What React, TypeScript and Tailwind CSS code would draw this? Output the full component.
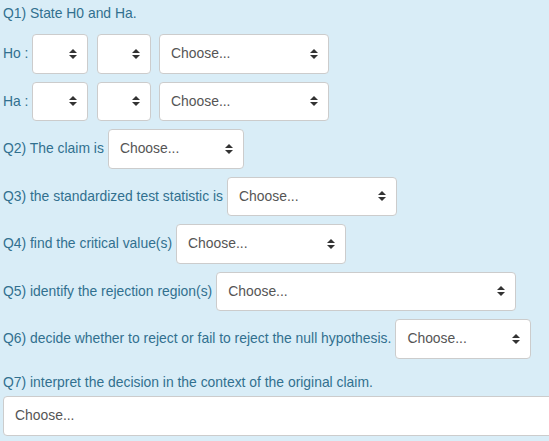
import React from 'react';

function Caret() {
  return (
    <svg width="8" height="10" viewBox="0 0 8 10" className="shrink-0">
      <path d="M0 4 L4 0 L8 4 Z" fill="#333" />
      <path d="M0 6 L4 10 L8 6 Z" fill="#333" />
    </svg>
  );
}

function FakeSelect({ width, text = 'Choose...' }: { width: string; text?: string }) {
  return (
    <div
      className={`${width} h-[39.5px] shrink-0 flex items-center justify-between pl-[11px] pr-[10px] bg-white border border-[#ccc] rounded-[4px] text-[#555]`}
    >
      <span>{text}</span>
      <Caret />
    </div>
  );
}

function Row({ label, children, className = '' }: { label: string; children: React.ReactNode; className?: string }) {
  return (
    <div className={`flex items-center gap-[4px] ${className}`}>
      <span className="whitespace-nowrap">{label}</span>
      {children}
    </div>
  );
}

export default function App() {
  return (
    <div
      className="w-[549px] h-[441px] overflow-hidden bg-[#d9edf7] text-[#31708f] text-[13.9px] pl-[3px] pt-[4px]"
      style={{ fontFamily: '"Liberation Sans", Arial, sans-serif' }}
    >
      <div className="h-[18px] leading-[18px]">Q1) State H0 and Ha.</div>

      <div className="flex flex-col gap-[8px] mt-[12px]">
        <div className="flex items-center">
          <span className="w-[29px] shrink-0 whitespace-nowrap">Ho :</span>
          <FakeSelect width="w-[56px]" text="" />
          <div className="w-[9px]" />
          <FakeSelect width="w-[54px]" text="" />
          <div className="w-[8px]" />
          <FakeSelect width="w-[170px]" />
        </div>
        <div className="flex items-center">
          <span className="w-[29px] shrink-0 whitespace-nowrap">Ha :</span>
          <FakeSelect width="w-[56px]" text="" />
          <div className="w-[9px]" />
          <FakeSelect width="w-[54px]" text="" />
          <div className="w-[8px]" />
          <FakeSelect width="w-[170px]" />
        </div>

        <Row label="Q2) The claim is">
          <FakeSelect width="w-[136px]" />
        </Row>
        <Row label="Q3) the standardized test statistic is">
          <FakeSelect width="w-[170px]" />
        </Row>
        <Row label="Q4) find the critical value(s)">
          <FakeSelect width="w-[170px]" />
        </Row>
        <Row label="Q5) identify the rejection region(s)">
          <FakeSelect width="w-[300px]" />
        </Row>
        <Row label="Q6) decide whether to reject or fail to reject the null hypothesis." className="gap-0">
          <FakeSelect width="w-[136px]" />
        </Row>
      </div>

      <div className="h-[18px] leading-[18px] mt-[14.5px]">
        Q7) interpret the decision in the context of the original claim.
      </div>
      <div className="mt-[5px]">
        <FakeSelect width="w-[620px]" />
      </div>
    </div>
  );
}
